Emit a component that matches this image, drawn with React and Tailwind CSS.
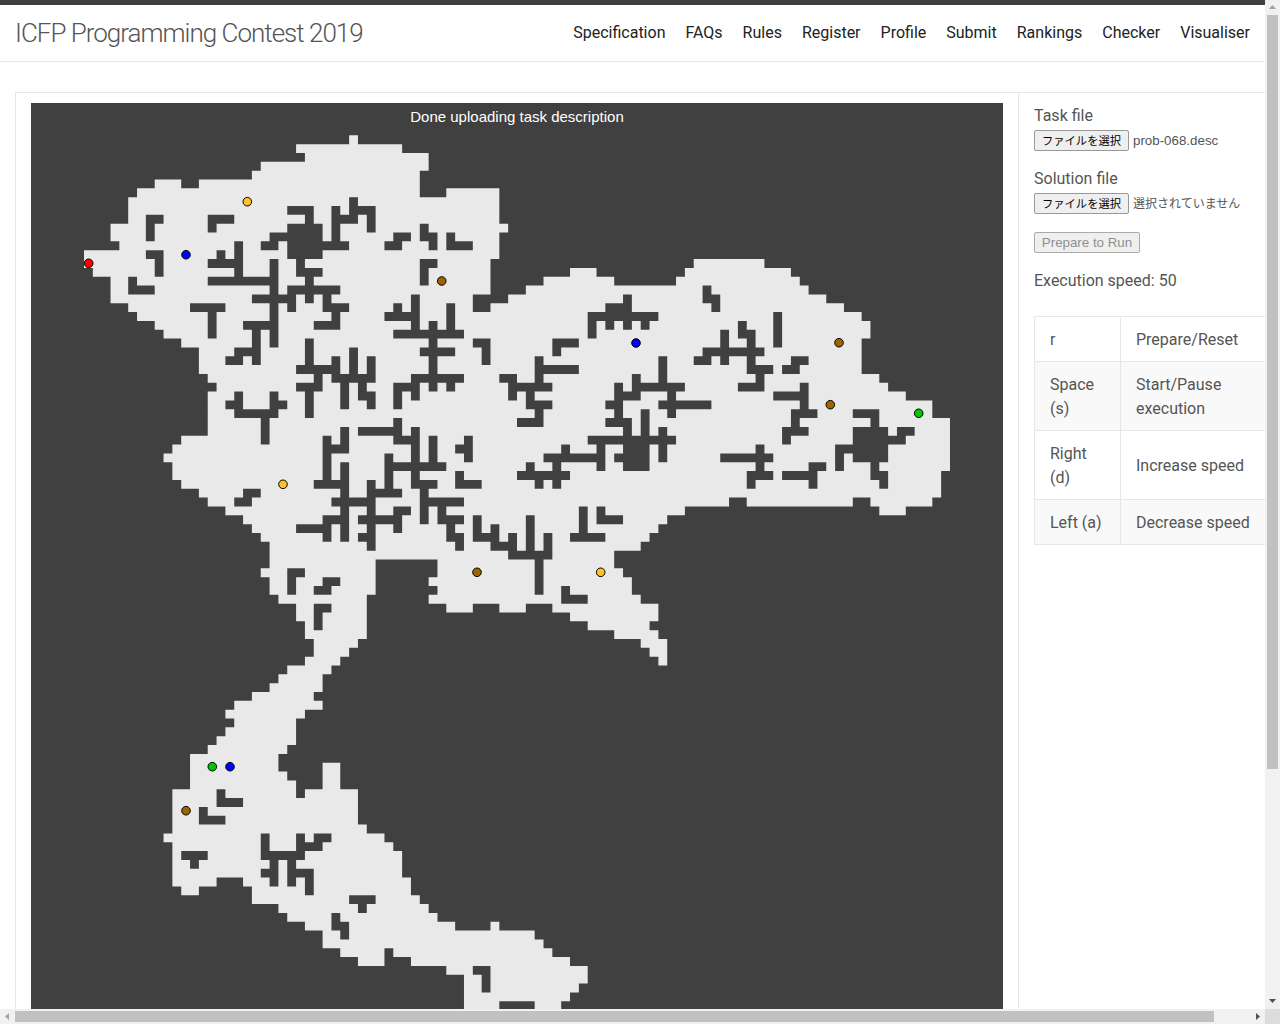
const navLinks = ['Specification', 'FAQs', 'Rules', 'Register', 'Profile', 'Submit', 'Rankings', 'Checker', 'Visualiser']

const keyRows = [
  ['r', 'Prepare/Reset'],
  ['Space (s)', 'Start/Pause execution'],
  ['Right (d)', 'Increase speed'],
  ['Left (a)', 'Decrease speed'],
]

// map grid: size of one cell and the first row's offset in the canvas
const CELL = 972 / 110
const TOP = 32.33

// land runs per row, [row, from, to, from, to...]
const land = [
  [0, 36, 37], [1, 30, 42], [2, 31, 45], [3, 26, 45], [4, 25, 44], [5, 14, 17, 19, 44], [6, 12, 44, 47, 53],
  [7, 11, 53], [8, 11, 53], [9, 11, 53], [10, 9, 54], [11, 9, 53], [12, 10, 53], [13, 6, 53], [14, 6, 52, 75, 83],
  [15, 7, 52, 61, 64, 74, 86], [16, 9, 52, 58, 66, 73, 87], [17, 9, 52, 56, 88], [18, 9, 50, 54, 90], [19, 11, 50, 52, 92],
  [20, 12, 94], [21, 14, 95], [22, 15, 95], [23, 17, 94], [24, 19, 94], [25, 19, 94], [26, 19, 94], [27, 20, 96],
  [28, 21, 97], [29, 20, 99], [30, 20, 102], [31, 20, 102], [32, 20, 104], [33, 20, 104], [34, 17, 104], [35, 16, 104],
  [36, 15, 104], [37, 16, 104], [38, 16, 103], [39, 17, 103], [40, 19, 103], [41, 20, 79, 81, 93, 95, 102],
  [42, 22, 74, 96, 99], [43, 24, 72], [44, 25, 71], [45, 26, 70], [46, 27, 69], [47, 27, 66], [48, 27, 39, 46, 66],
  [49, 26, 39, 46, 67], [50, 27, 39, 45, 68], [51, 27, 39, 46, 68], [52, 28, 38, 45, 69],
  [53, 30, 38, 47, 50, 53, 56, 59, 71], [54, 30, 38, 61, 71], [55, 31, 38, 63, 70], [56, 31, 38, 66, 71],
  [57, 32, 37, 69, 72], [58, 32, 36, 70, 72], [59, 31, 35, 71, 72], [60, 29, 34], [61, 28, 33], [62, 27, 33],
  [63, 25, 32], [64, 23, 33], [65, 22, 31], [66, 23, 30], [67, 22, 30], [68, 21, 30], [69, 20, 29], [70, 18, 28],
  [71, 18, 28, 33, 35], [72, 18, 29, 33, 35], [73, 18, 30, 33, 35], [74, 16, 30, 31, 37], [75, 16, 37], [76, 16, 37],
  [77, 16, 37], [78, 16, 38], [79, 15, 40], [80, 16, 41], [81, 16, 42], [82, 16, 42], [83, 16, 42], [84, 16, 21, 24, 43],
  [85, 17, 19, 25, 43], [86, 25, 44], [87, 28, 45], [88, 29, 46], [89, 31, 48, 52, 53], [90, 33, 57], [91, 33, 58],
  [92, 35, 40, 41, 59], [93, 37, 40, 43, 61], [94, 47, 63], [95, 49, 63], [96, 49, 62], [97, 49, 61], [98, 49, 60],
]

// obstacles as [from col, to col (excl), from row, to row (incl)]
const walls = [
  [13, 15, 9, 9], [13, 14, 9, 11], [20, 23, 9, 9], [20, 21, 9, 10], [29, 32, 8, 8], [31, 32, 9, 9], [29, 33, 10, 13],
  [27, 29, 11, 11], [26, 28, 12, 12], [33, 36, 12, 12], [34, 35, 8, 11], [34, 37, 9, 9], [36, 37, 7, 9], [36, 39, 8, 8],
  [38, 39, 8, 10], [30, 31, 14, 15], [30, 33, 15, 15], [31, 32, 16, 18], [29, 35, 17, 17], [29, 30, 17, 19], [25, 30, 18, 18],
  [33, 34, 18, 19], [33, 36, 19, 19], [34, 35, 20, 21], [32, 35, 21, 21], [27, 28, 14, 23], [20, 27, 16, 16], [23, 24, 12, 15],
  [20, 23, 14, 14], [21, 22, 13, 13], [24, 27, 21, 21], [25, 26, 22, 25], [23, 26, 24, 24], [22, 24, 25, 25], [18, 22, 19, 19],
  [20, 21, 20, 22], [11, 12, 16, 17], [11, 14, 17, 17], [13, 15, 13, 13], [14, 15, 13, 15], [31, 32, 23, 25], [30, 35, 26, 26],
  [32, 33, 27, 28], [30, 33, 28, 28], [31, 32, 29, 31], [34, 35, 25, 27], [36, 37, 24, 27], [38, 39, 25, 27], [34, 39, 27, 27],
  [35, 36, 28, 30], [37, 38, 28, 29], [37, 39, 29, 29], [38, 39, 30, 30], [23, 24, 29, 31], [22, 24, 30, 30], [27, 28, 29, 31],
  [27, 29, 30, 30], [23, 28, 31, 31], [26, 27, 32, 34],
  [35, 36, 33, 35], [33, 34, 34, 39], [33, 36, 35, 35], [37, 42, 33, 33], [41, 42, 32, 34], [41, 44, 34, 34], [43, 44, 33, 39],
  [45, 46, 34, 37], [40, 41, 36, 39], [40, 47, 37, 37], [48, 50, 35, 35], [49, 50, 34, 36], [48, 49, 38, 39], [48, 51, 39, 39],
  [43, 46, 39, 39], [44, 45, 40, 43], [45, 49, 41, 41], [46, 47, 42, 43], [46, 49, 43, 43], [47, 48, 44, 45], [47, 49, 45, 45],
  [48, 49, 46, 46], [32, 36, 39, 39], [35, 36, 37, 45], [38, 39, 39, 46], [38, 42, 40, 40], [34, 39, 41, 41], [33, 36, 43, 43],
  [33, 34, 43, 45], [30, 34, 44, 44], [37, 42, 43, 43], [41, 43, 42, 42], [41, 42, 42, 44], [37, 39, 45, 45], [24, 26, 40, 40],
  [23, 25, 41, 41], [29, 31, 49, 49], [29, 30, 49, 51], [33, 35, 50, 50], [32, 34, 51, 51], [32, 34, 53, 53], [32, 33, 53, 55],
  [41, 43, 11, 11], [40, 42, 12, 12], [44, 45, 10, 11], [44, 46, 11, 11], [45, 46, 11, 12], [47, 48, 11, 12], [47, 50, 12, 12],
  [44, 46, 14, 14], [44, 45, 14, 16], [43, 44, 18, 21], [41, 42, 19, 19], [40, 44, 20, 20], [45, 46, 21, 28], [47, 48, 19, 21],
  [41, 49, 22, 22], [44, 48, 24, 24], [43, 49, 27, 27], [41, 44, 28, 28], [41, 42, 28, 30], [43, 44, 28, 29], [47, 48, 28, 28],
  [50, 52, 23, 23], [51, 52, 23, 25], [53, 55, 27, 27], [54, 55, 27, 29], [54, 59, 28, 28], [56, 57, 29, 30], [56, 59, 30, 30],
  [57, 58, 31, 32], [55, 58, 32, 32], [57, 58, 25, 28], [57, 62, 26, 26], [59, 62, 23, 23], [59, 60, 23, 24], [63, 64, 20, 22],
  [63, 71, 20, 20], [65, 66, 19, 21], [65, 68, 19, 19], [67, 68, 18, 21], [69, 70, 21, 21], [71, 72, 25, 28], [68, 69, 27, 29],
  [69, 74, 28, 28], [66, 67, 28, 32], [66, 69, 29, 29], [65, 67, 30, 30], [65, 68, 32, 32], [67, 68, 33, 33], [69, 70, 31, 33],
  [76, 77, 17, 18], [76, 78, 18, 18], [77, 78, 18, 19], [84, 85, 20, 23], [80, 81, 21, 22], [80, 82, 22, 22], [81, 82, 22, 26],
  [78, 79, 22, 25], [76, 83, 24, 24], [75, 77, 25, 25], [81, 84, 26, 26], [82, 83, 27, 28], [80, 83, 28, 28], [86, 88, 25, 25],
  [85, 87, 26, 26], [72, 73, 29, 31], [71, 77, 30, 30], [71, 72, 33, 36], [71, 73, 34, 34], [87, 88, 28, 30], [84, 88, 29, 29],
  [86, 89, 31, 31], [86, 87, 31, 32], [85, 88, 33, 33], [85, 86, 33, 34], [93, 96, 31, 31], [95, 96, 32, 32], [93, 97, 33, 36],
  [97, 99, 34, 34], [98, 100, 33, 33], [91, 93, 35, 35], [91, 92, 35, 37], [95, 96, 37, 38], [95, 97, 38, 38], [96, 97, 38, 39],
  [82, 83, 35, 37], [78, 84, 36, 36], [81, 82, 38, 39], [81, 84, 38, 38], [85, 89, 38, 38], [88, 90, 37, 37], [88, 89, 37, 39],
  [50, 51, 43, 45], [50, 53, 45, 45], [52, 53, 44, 46], [52, 55, 46, 46], [54, 55, 45, 47], [54, 59, 47, 47], [56, 57, 43, 46],
  [58, 59, 45, 47], [57, 58, 48, 51], [60, 61, 51, 52], [60, 63, 52, 52], [61, 65, 45, 45], [62, 63, 42, 45], [64, 65, 42, 43],
  [64, 67, 43, 43], [55, 61, 38, 38], [56, 57, 37, 37], [57, 58, 39, 39], [59, 60, 37, 39], [58, 64, 36, 36], [60, 61, 35, 35],
  [63, 73, 34, 34], [64, 65, 35, 37], [65, 68, 32, 32], [67, 68, 32, 33], [69, 70, 32, 33], [67, 70, 34, 37], [66, 67, 36, 36],
  [21, 22, 74, 75], [21, 24, 75, 75], [19, 20, 76, 77], [19, 22, 77, 77], [17, 20, 81, 81], [18, 19, 82, 82], [26, 27, 79, 81],
  [26, 31, 81, 81], [30, 31, 79, 81], [30, 33, 80, 80], [32, 34, 79, 79], [27, 28, 82, 84], [26, 28, 83, 83], [29, 30, 82, 84],
  [29, 32, 83, 83], [31, 32, 83, 85], [36, 39, 86, 86], [37, 38, 87, 87], [34, 35, 88, 89], [35, 36, 89, 90], [50, 52, 94, 94],
  [51, 52, 94, 96], [53, 57, 98, 98],
]

// boosters and the robot, in page pixels
const dots = [
  [88.7, 263.3, '#ff0000'], [186, 254.7, '#0000ff'], [636, 343, '#0000ff'], [230, 766.7, '#0000ff'],
  [247.3, 201.7, '#ffc12b'], [283, 484.3, '#ffc12b'], [600.7, 572.3, '#ffc12b'],
  [441.7, 281, '#9c6500'], [839, 342.7, '#9c6500'], [830.3, 404.7, '#9c6500'], [477, 572.3, '#9c6500'], [186, 810.7, '#9c6500'],
  [918.7, 413.3, '#00c800'], [212.3, 766.7, '#00c800'],
]

function buildLandPath() {
  const grid = land.map(() => new Array(110).fill(false))
  land.forEach(([r, ...runs]) => {
    for (let i = 0; i < runs.length; i += 2) {
      for (let c = runs[i]; c < runs[i + 1]; c++) grid[r][c] = true
    }
  })
  walls.forEach(([c0, c1, r0, r1]) => {
    for (let r = r0; r <= r1; r++) {
      for (let c = c0; c < c1; c++) grid[r][c] = false
    }
  })
  let d = ''
  grid.forEach((row, r) => {
    const y0 = (TOP + r * CELL).toFixed(2)
    const y1 = (TOP + (r + 1) * CELL).toFixed(2)
    let c = 0
    while (c < 110) {
      if (!row[c]) {
        c++
        continue
      }
      let e = c
      while (e < 110 && row[e]) e++
      const x0 = (c * CELL).toFixed(2)
      const x1 = (e * CELL).toFixed(2)
      d += `M${x0} ${y0}H${x1}V${y1}H${x0}Z`
      c = e
    }
  })
  return d
}

const landPath = buildLandPath()

function FileRow({ name, cjk }) {
  return (
    <div className="flex items-center h-[21px]">
      <button
        type="button"
        className="h-[21px] w-[95px] shrink-0 rounded-[2px] border border-[#999] bg-[#efefef] text-[11.3px] text-black [font-family:'Noto_Sans_CJK_JP',sans-serif] leading-none"
      >
        ファイルを選択
      </button>
      <span className={`ml-[4px] text-[#555] whitespace-nowrap [font-family:'Liberation_Sans','Noto_Sans_CJK_JP',sans-serif] ${cjk ? 'text-[12px]' : 'text-[13.33px]'}`}>
        {name}
      </span>
    </div>
  )
}

function Arrow({ points, color }) {
  return (
    <svg width="15" height="15" viewBox="0 0 15 15" className="block shrink-0">
      <polygon points={points} fill={color} />
    </svg>
  )
}

export default function App() {
  return (
    <div className="w-[1280px] h-[1024px] overflow-hidden flex flex-col bg-white text-[#555] [font-family:Roboto,sans-serif] text-[16px] leading-6">
      <div className="flex h-[1009px]">
        <div className="w-[1265px] overflow-hidden">
          <header className="h-[62px] border-t-[5px] border-b border-t-[#3f3f3f] border-b-[#e7e7e7] flex items-center justify-between px-[15px]">
            <a className="text-[26px] font-light text-[#555] tracking-[-1px] whitespace-nowrap">ICFP Programming Contest 2019</a>
            <nav className="flex gap-5">
              {navLinks.map((l) => (
                <a key={l} className="text-[#222] whitespace-nowrap">{l}</a>
              ))}
            </nav>
          </header>
          <div className="w-[1303px] pt-[30px] px-[15px]">
            <div className="border border-[#e7e7e7] flex">
              <div className="pt-[10px] px-[15px] pb-[15px] border-r border-[#e7e7e7]">
                <div className="relative w-[972px] h-[1172px] bg-[#404040]">
                  <svg width="972" height="1172" viewBox="0 0 972 1172" className="block">
                    <path d={landPath} fill="#e9e9e9" />
                    {dots.map(([x, y, color], i) => (
                      <circle key={i} cx={x - 31} cy={y - 103} r="4.3" fill={color} stroke="#000" strokeWidth="1" />
                    ))}
                  </svg>
                  <div className="absolute top-[2px] inset-x-0 text-center text-white text-[15px] [font-family:'Liberation_Sans',sans-serif]">
                    Done uploading task description
                  </div>
                </div>
              </div>
              <aside className="pt-[11px] pl-[15px] w-[262px]">
                <div className="mb-[2px]">Task file</div>
                <FileRow name="prob-068.desc" />
                <div className="mt-[16px] mb-[2px]">Solution file</div>
                <FileRow name="選択されていません" cjk />
                <button
                  type="button"
                  disabled
                  className="mt-[18px] block h-[21px] w-[106px] rounded-[2px] border border-[#aaa] bg-[#efefef] text-[13.33px] text-[#8f8f8f] leading-none [font-family:'Liberation_Sans',sans-serif]"
                >
                  Prepare to Run
                </button>
                <div className="mt-[16px] mb-[23px]">Execution speed: 50</div>
                <table className="w-[232px] border-collapse table-fixed">
                  <tbody>
                    {keyRows.map(([key, action], i) => (
                      <tr key={key} className={i % 2 === 1 ? 'bg-[#f9f9f9]' : ''}>
                        <td className="w-[86px] border border-[#e7e7e7] px-[15px] pt-[11px] pb-[9px] align-middle">{key}</td>
                        <td className="border border-[#e7e7e7] px-[15px] pt-[11px] pb-[9px] align-middle">{action}</td>
                      </tr>
                    ))}
                  </tbody>
                </table>
              </aside>
            </div>
          </div>
        </div>
        {/* vertical scrollbar */}
        <div className="w-[15px] bg-[#f1f1f1] flex flex-col">
          <Arrow points="4,9 11,9 7.5,5" color="#a3a3a3" />
          <div className="h-[754px] ml-[2px] w-[11px] bg-[#c1c1c1]" />
          <div className="flex-1" />
          <Arrow points="4,5 11,5 7.5,9" color="#505050" />
        </div>
      </div>
      {/* horizontal scrollbar */}
      <div className="flex h-[15px]">
        <div className="w-[1265px] bg-[#f1f1f1] flex">
          <Arrow points="9,4 9,11 5,7.5" color="#a3a3a3" />
          <div className="w-[1199px] my-[2px] h-[11px] bg-[#c1c1c1]" />
          <div className="flex-1" />
          <Arrow points="6,4 6,11 10,7.5" color="#505050" />
        </div>
        <div className="w-[15px] bg-[#dcdcdc]" />
      </div>
    </div>
  )
}
